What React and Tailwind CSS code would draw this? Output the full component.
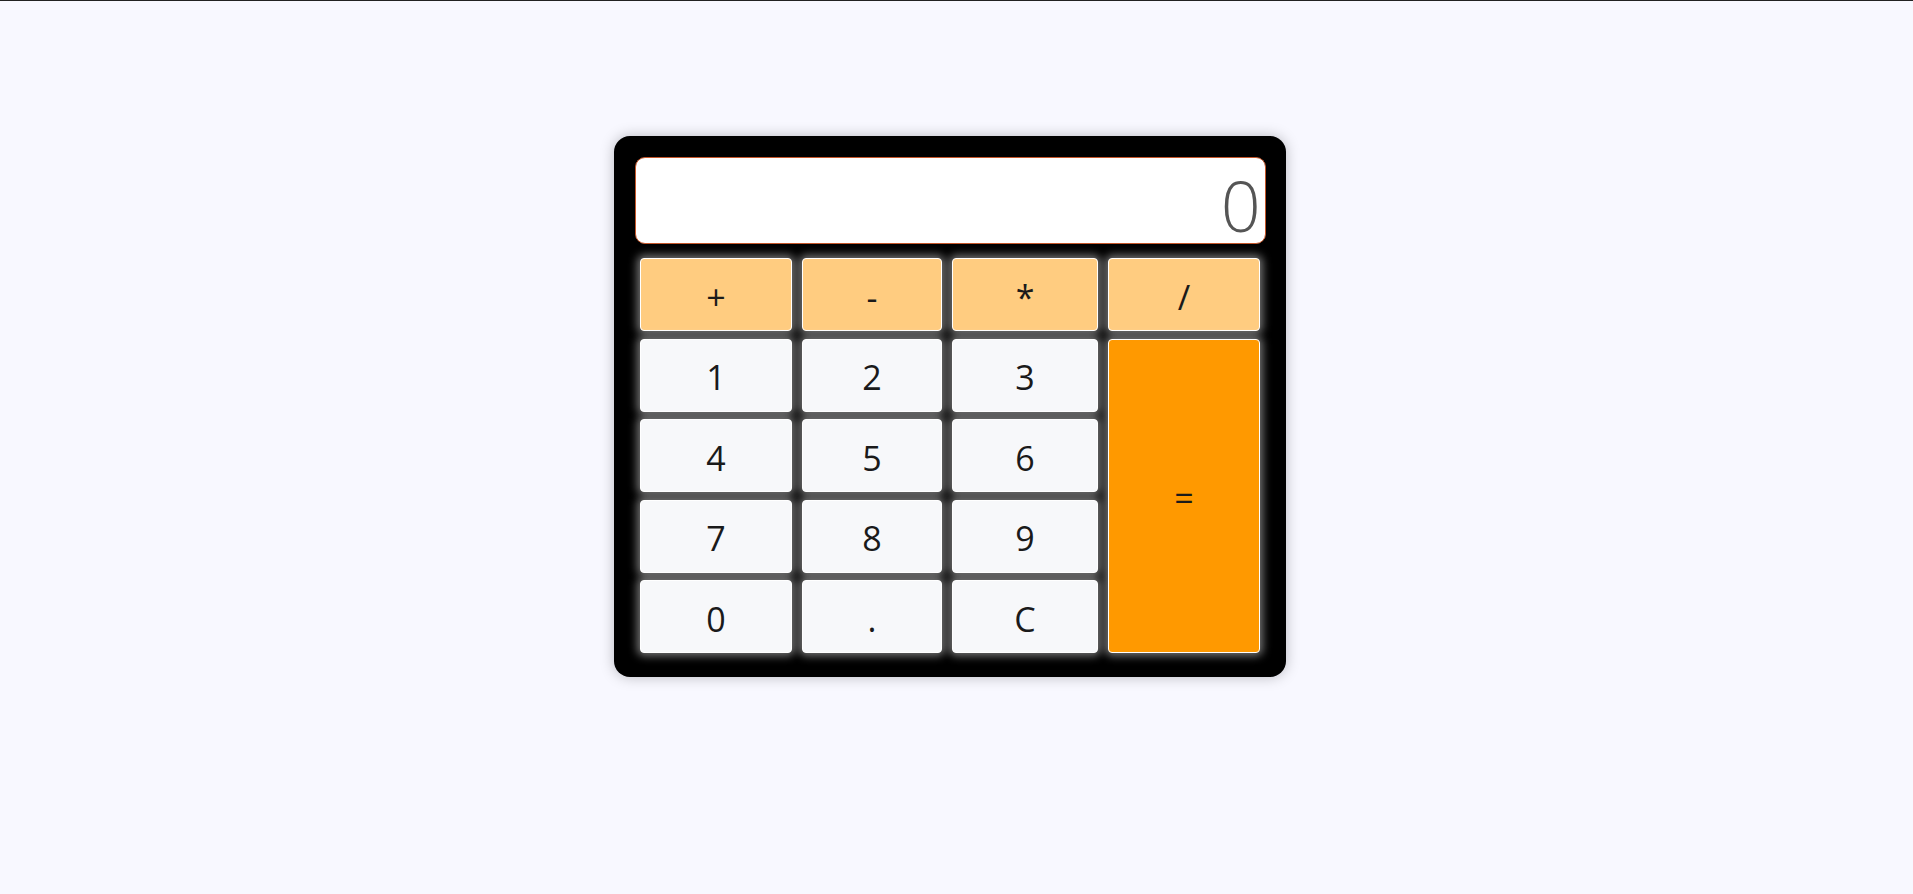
import React, { useState } from 'react';

const keys = [
  { label: '+', kind: 'op' },
  { label: '-', kind: 'op' },
  { label: '*', kind: 'op' },
  { label: '/', kind: 'op' },
  { label: '1', kind: 'num' },
  { label: '2', kind: 'num' },
  { label: '3', kind: 'num' },
  { label: '=', kind: 'eq' },
  { label: '4', kind: 'num' },
  { label: '5', kind: 'num' },
  { label: '6', kind: 'num' },
  { label: '7', kind: 'num' },
  { label: '8', kind: 'num' },
  { label: '9', kind: 'num' },
  { label: '0', kind: 'num' },
  { label: '.', kind: 'num' },
  { label: 'C', kind: 'num' },
];

const kindClass = {
  op: 'bg-[#ffcc80]',
  num: 'bg-[#f7f8fa]',
  eq: 'bg-[#ff9900] row-span-4',
};

export default function App() {
  const [display, setDisplay] = useState('0');

  const press = (label) => {
    if (label === 'C') {
      setDisplay('0');
      return;
    }
    if (label === '=') {
      try {
        // simple evaluation of the expression
        const result = Function(`return (${display})`)();
        setDisplay(String(result));
      } catch (e) {
        setDisplay('Error');
      }
      return;
    }
    setDisplay((prev) => (prev === '0' && label !== '.' ? label : prev + label));
  };

  return (
    <div
      className="min-h-screen bg-[#f8f8ff] border-t border-[#222] pt-[135px] flex justify-center pr-[13px]"
      style={{ fontFamily: '"Open Sans", "Noto Sans", sans-serif' }}
    >
      <div className="w-[672px] h-[541px] bg-black rounded-2xl pt-[21px] pl-[21px] pr-[20px] shadow-[0_0_14px_rgba(0,0,0,0.25)]">
        {/* Display */}
        <div className="h-[87px] w-full bg-white rounded-[10px] border border-[#c4562a] flex items-center justify-end pr-[6px]">
          <span className="text-[70px] font-light text-[#555] leading-[80px] mt-[8px] tracking-tight">{display}</span>
        </div>

        {/* Keys */}
        <div className="mt-[14px] ml-[5px] grid grid-cols-[152px_140px_146px_152px] auto-rows-[73px] gap-x-[10px] gap-y-[7.5px]">
          {keys.map((k) => (
            <button
              key={k.label}
              onClick={() => press(k.label)}
              className={`${kindClass[k.kind]} rounded-[4px] border border-white shadow-[0_0_8px_3px_rgba(255,255,255,0.45)] text-[34px] text-[#1a1a1a] leading-none flex items-center justify-center pt-[4px]`}
            >
              {k.label}
            </button>
          ))}
        </div>
      </div>
    </div>
  );
}
